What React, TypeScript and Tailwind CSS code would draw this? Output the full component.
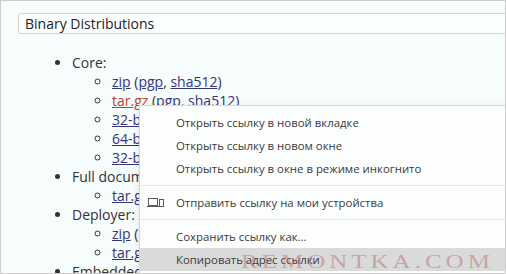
import * as React from "react"

type Sub = { name: string; visited?: boolean }

const sections: { title: string; items: Sub[] }[] = [
  {
    title: "Core:",
    items: [
      { name: "zip" },
      { name: "tar.gz", visited: true },
      { name: "32-bit Windows zip" },
      { name: "64-bit Windows zip" },
      { name: "32-bit/64-bit Windows Service Installer" },
    ],
  },
  { title: "Full documentation:", items: [{ name: "tar.gz" }] },
  { title: "Deployer:", items: [{ name: "zip" }, { name: "tar.gz" }] },
  { title: "Embedded:", items: [{ name: "tar.gz" }, { name: "zip" }] },
]

const menu: (string | null)[] = [
  "Открыть ссылку в новой вкладке",
  "Открыть ссылку в новом окне",
  "Открыть ссылку в окне в режиме инкогнито",
  null,
  "Отправить ссылку на мои устройства",
  null,
  "Сохранить ссылку как...",
  "Копировать адрес ссылки",
]

function DevicesIcon() {
  return (
    <svg width="17" height="10" viewBox="0 0 17 10" className="text-[#5a5a5a]">
      <rect x="1.5" y="0.5" width="9" height="7" fill="none" stroke="currentColor" />
      <line x1="0" y1="8.5" x2="12" y2="8.5" stroke="currentColor" />
      <rect x="12.5" y="1.5" width="4" height="7" fill="none" stroke="currentColor" />
    </svg>
  )
}

function Link({ children, visited }: { children: React.ReactNode; visited?: boolean }) {
  return (
    <a className={visited ? "text-[#b8432f] underline" : "text-[#34347e] underline"}>
      {children}
    </a>
  )
}

export default function App() {
  return (
    <div className="relative box-border h-[274px] w-[506px] overflow-hidden border border-[#cdcdcd] bg-[#f7fcfd] font-['Open_Sans',sans-serif] text-[14px] leading-[19px] text-[#333]">
      <div className="-mr-4 ml-[17px] mt-3 flex h-[21px] items-center rounded-l-[3px] border border-[#d2d2d2] bg-[#fbfeff] pl-[6px] text-[#222]">
        Binary Distributions
      </div>

      <ul className="ml-[31px] mt-[19px] list-disc pl-10">
        {sections.map((s) => (
          <li key={s.title}>
            {s.title}
            <ul className="list-[circle] pl-10">
              {s.items.map((it) => (
                <li key={it.name} className="whitespace-nowrap">
                  <Link visited={it.visited}>{it.name}</Link> (<Link>pgp</Link>,{" "}
                  <Link>sha512</Link>)
                </li>
              ))}
            </ul>
          </li>
        ))}
      </ul>

      {/* context menu */}
      <div className="absolute left-[138px] top-[104px] w-[400px] border border-[#d6d6d6] bg-[#fcfefe] pt-[5px] pb-1 font-['Open_Sans',sans-serif] text-[11.4px] text-[#3a3a3a] shadow-[0_2px_6px_rgba(0,0,0,0.12)]">
        {menu.map((m, i) =>
          m === null ? (
            <div key={i} className="my-[5px] h-px bg-[#e8e8e8]" />
          ) : (
            <div
              key={i}
              className={
                i === 7
                  ? "relative flex h-[23px] items-center bg-[#dadada] pl-9"
                  : "relative flex h-[23px] items-center pl-9"
              }
            >
              {i === 4 && (
                <span className="absolute left-[7px] top-[7px]">
                  <DevicesIcon />
                </span>
              )}
              {m}
            </div>
          )
        )}
      </div>

      <div className="pointer-events-none absolute left-[240px] top-[243px] origin-bottom scale-y-75 font-['Liberation_Serif',serif] text-[25px] leading-[28px] tracking-[4px] whitespace-nowrap text-[rgba(180,110,110,0.5)]">
        REMONTKA.COM
      </div>
    </div>
  )
}
